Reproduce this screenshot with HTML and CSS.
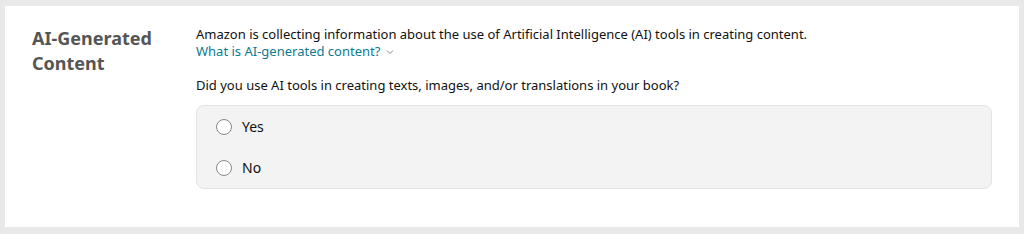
FILE: index.html
```html
<!DOCTYPE html>
<html lang="en">
<head>
    <meta charset="UTF-8">
    <meta name="viewport" content="width=device-width, initial-scale=1.0">
    <title>AI-Generated Content</title>
    <link rel="stylesheet" href="styles.css">
</head>
<body>
    <div class="card">
        <h2 class="section-title">AI-Generated Content</h2>
        <div class="section-body">
            <p class="intro">Amazon is collecting information about the use of Artificial Intelligence (AI) tools in creating content.</p>
            <a class="more-link" href="#">What is AI-generated content?
                <svg class="chevron" width="8" height="6" viewBox="0 0 8 6"><path d="M1 1.5 L4 4.5 L7 1.5" fill="none" stroke="#888" stroke-width="1"/></svg>
            </a>
            <p class="question">Did you use AI tools in creating texts, images, and/or translations in your book?</p>
            <div class="options">
                <label class="option"><span class="radio"></span>Yes</label>
                <label class="option"><span class="radio"></span>No</label>
            </div>
        </div>
    </div>
</body>
</html>
```

FILE: styles.css
```css
body {
    margin: 0;
    background-color: #e9e9e9;
    font-family: "Noto Sans", Arial, sans-serif;
    color: #111;
}
.card {
    background-color: #fff;
    margin: 6px 5px 7px 5px;
    height: 221px;
    box-sizing: border-box;
    padding: 20px 27px 0 27px;
    display: grid;
    grid-template-columns: 164px 1fr;
    align-items: start;
}
.section-title {
    margin: 0;
    font-size: 18px;
    line-height: 25px;
    font-weight: bold;
    color: #555;
    width: 130px;
}
.intro {
    margin: 0;
    font-size: 13px;
    line-height: 17px;
}
.more-link {
    display: block;
    font-size: 13px;
    line-height: 16px;
    color: #0b7c8f;
    text-decoration: none;
}
.chevron {
    margin-left: 2px;
    vertical-align: 1px;
}
.question {
    margin: 18px 0 0 0;
    font-size: 13px;
    line-height: 17px;
}
.options {
    margin-top: 11px;
    background-color: #f3f3f3;
    border: 1px solid #e3e3e3;
    border-radius: 8px;
    padding: 0 19px;
}
.option {
    display: flex;
    align-items: center;
    height: 41px;
    font-size: 14px;
}
.radio {
    width: 14px;
    height: 14px;
    border: 1px solid #888;
    border-radius: 50%;
    background-color: #fff;
    margin-right: 10px;
}
```
